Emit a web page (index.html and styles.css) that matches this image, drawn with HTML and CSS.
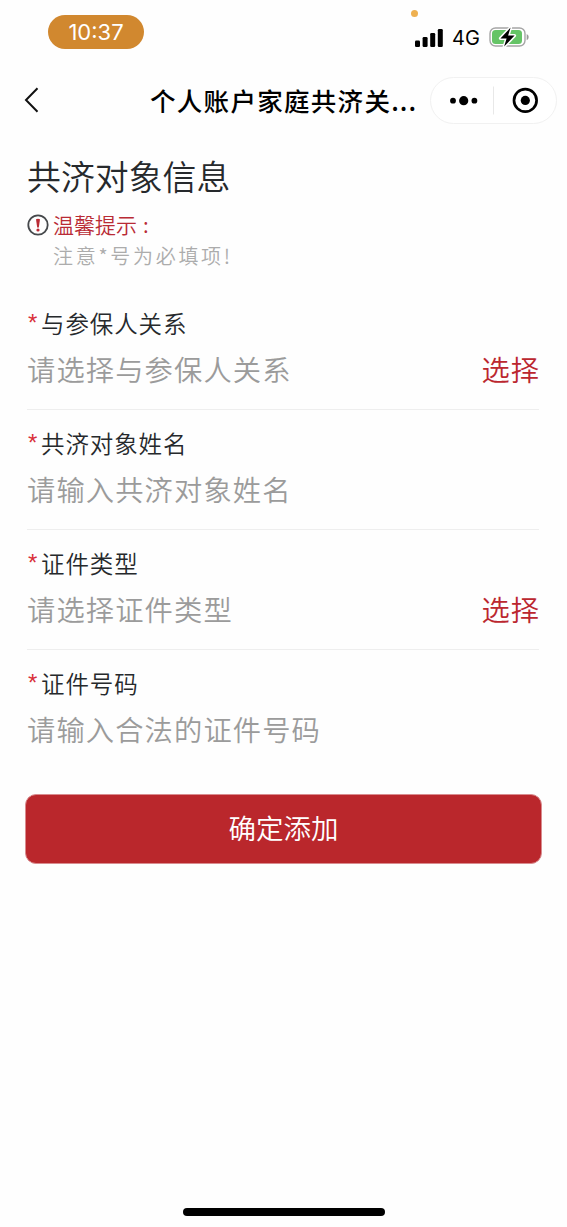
FILE: index.html
```html
<!DOCTYPE html>
<html lang="zh-CN">
<head>
<meta charset="utf-8">
<title>个人账户家庭共济关系</title>
<link rel="stylesheet" href="styles.css">
</head>
<body>
<div class="screen">
  <header class="status">
    <span class="clock">10:37</span>
    <span class="mic-dot"></span>
    <div class="indicators">
      <svg class="signal" width="28" height="18" viewBox="0 0 28 18">
        <rect x="0" y="11.5" width="5" height="6.5" rx="1.3"/>
        <rect x="7.6" y="8" width="5" height="10" rx="1.3"/>
        <rect x="15.2" y="4" width="5" height="14" rx="1.3"/>
        <rect x="22.8" y="0" width="5" height="18" rx="1.3"/>
      </svg>
      <span class="network">4G</span>
      <svg class="battery" width="41" height="24" viewBox="0 0 41 24">
        <rect x="1" y="3" width="35" height="18" rx="5.5" fill="#fff" stroke="#a5a5a5" stroke-width="1.4"/>
        <path d="M37.7 9v6.2q2-.9 2-3.1t-2-3.1z" fill="#999"/>
        <rect x="3" y="5" width="30" height="14" rx="3.5" fill="#65c466"/>
        <path d="M21.6 2.6 11.4 13.4h6.2l-2.5 8.2 10.5-11h-6.5z" fill="#000" stroke="#fff" stroke-width="3" stroke-linejoin="round" paint-order="stroke"/>
      </svg>
    </div>
  </header>
  <nav class="nav">
    <svg class="back" width="16" height="26" viewBox="0 0 16 26"><path d="M13.5 1.3 2 13l11.5 11.7" fill="none" stroke="#111" stroke-width="2"/></svg>
    <h1 class="nav-title">个人账户家庭共济关<span class="ellipsis">...</span></h1>
    <div class="capsule">
      <svg width="125" height="45" viewBox="0 0 125 45">
        <circle cx="22" cy="22.7" r="2.9"/><circle cx="32.7" cy="22.7" r="4.6"/><circle cx="43.4" cy="22.7" r="2.9"/>
        <path d="M62.5 8.5v28" stroke="#e8e8e8"/>
        <circle cx="94.3" cy="22.4" r="11.3" fill="none" stroke="#000" stroke-width="2.7"/><circle cx="94.3" cy="22.4" r="4.6"/>
      </svg>
    </div>
  </nav>
  <main class="content">
    <h2 class="heading">共济对象信息</h2>
    <div class="tip">
      <svg class="tip-icon" width="22" height="22" viewBox="0 0 22 22"><circle cx="11" cy="11" r="9.7" fill="none" stroke="#45484b" stroke-width="1.8"/><path d="M9 5.2q2-.9 4 0l-1.2 8.2h-1.6z" fill="#b92b35"/><circle cx="11" cy="16" r="1.6" fill="#b92b35"/></svg>
      <span class="tip-title">温馨提示<span class="colon">:</span></span>
    </div>
    <p class="note">注意<span class="note-star">*</span>号为必填项<span class="bang">!</span></p>
    <section class="form">
      <div class="field">
        <div class="label"><span class="star">*</span>与参保人关系</div>
        <div class="value"><span>请选择与参保人关系</span><span class="pick">选择</span></div>
      </div>
      <div class="field">
        <div class="label"><span class="star">*</span>共济对象姓名</div>
        <div class="value"><span>请输入共济对象姓名</span></div>
      </div>
      <div class="field">
        <div class="label"><span class="star">*</span>证件类型</div>
        <div class="value"><span>请选择证件类型</span><span class="pick">选择</span></div>
      </div>
      <div class="field">
        <div class="label"><span class="star">*</span>证件号码</div>
        <div class="value"><span>请输入合法的证件号码</span></div>
      </div>
    </section>
    <button class="submit">确定添加</button>
  </main>
  <div class="home-bar"></div>
</div>
</body>
</html>
```
FILE: styles.css
```css
* { box-sizing: border-box; }
body { margin: 0; background: #fff; font-family: "Noto Sans CJK SC", sans-serif; }
h1, h2, p { margin: 0; font-weight: 400; }
svg { display: block; flex: none; }
.screen { width: 567px; height: 1227px; display: flex; flex-direction: column; background: #fefefe; }

.status { position: relative; height: 70px; padding: 15px 37px 0 48px; display: flex; justify-content: space-between; align-items: flex-start; }
.clock { width: 96px; height: 34px; border-radius: 17px; background: #d1882f; color: #fff; font: 22px/35px Inter, sans-serif; text-align: center; }
.mic-dot { position: absolute; left: 411px; top: 10px; width: 7px; height: 7px; border-radius: 50%; background: #eeb050; }
.indicators { display: flex; align-items: center; height: 24px; margin-top: 10px; }
.signal { margin-top: 1px; }
.network { margin: 2px 9px 0 9px; width: 28px; font: 20px/24px Inter, sans-serif; white-space: nowrap; }

.nav { height: 60px; padding: 0 10px 0 24px; display: flex; align-items: center; }
.nav-title { margin-left: 110px; width: 280px; font-size: 25.5px; letter-spacing: 1.3px; line-height: 40px; font-weight: 500; color: #000; white-space: nowrap; }
.ellipsis { letter-spacing: 1px; }
.capsule { width: 127px; height: 47px; border: 1px solid #f1f1f1; border-radius: 24px; background: #fff; margin-top: 1px; }

.content { padding: 0 28px 0 27px; display: flex; flex-direction: column; }
.heading { margin-top: 21px; font-size: 33.9px; line-height: 50px; font-weight: 350; color: #26292c; }
.tip { margin-top: 8px; height: 30px; display: flex; align-items: center; gap: 4px; }
.tip-icon { margin-top: 1px; }
.tip-title { font-size: 21px; line-height: 30px; font-weight: 350; color: #b92b35; }
.colon { margin-left: 6px; }
.note { margin: 2px 0 0 26px; font-size: 20px; letter-spacing: 2.7px; line-height: 30px; font-weight: 350; color: #acacac; }

.form { margin-top: 19px; }
.field { height: 120px; padding-top: 15px; border-bottom: 1px solid #eee; }
.field:last-child { border-bottom: 0; }
.label { display: flex; font-size: 23.5px; letter-spacing: .9px; line-height: 36px; font-weight: 350; color: #26292c; }
.star { width: 13px; margin-left: 1px; color: #d9303a; font: 24px/36px "Liberation Sans", sans-serif; height: 36px; }
.value { margin-top: 6px; display: flex; justify-content: space-between; font-size: 28.3px; letter-spacing: 1.1px; line-height: 44px; font-weight: 350; color: #9b9b9b; }
.pick { margin-right: -1px; color: #bb272f; letter-spacing: .9px; }
.submit { margin: 24px -3px 0 -2px; height: 70px; border: 1px solid #d98c8f; border-radius: 11px; background: #ba272c; color: #fff; font: 350 27.5px/64px "Noto Sans CJK SC", sans-serif; padding: 0 0 4px; }
.home-bar { width: 202px; height: 8px; margin: auto auto 11px 183px; border-radius: 4px; background: #000; }
```
